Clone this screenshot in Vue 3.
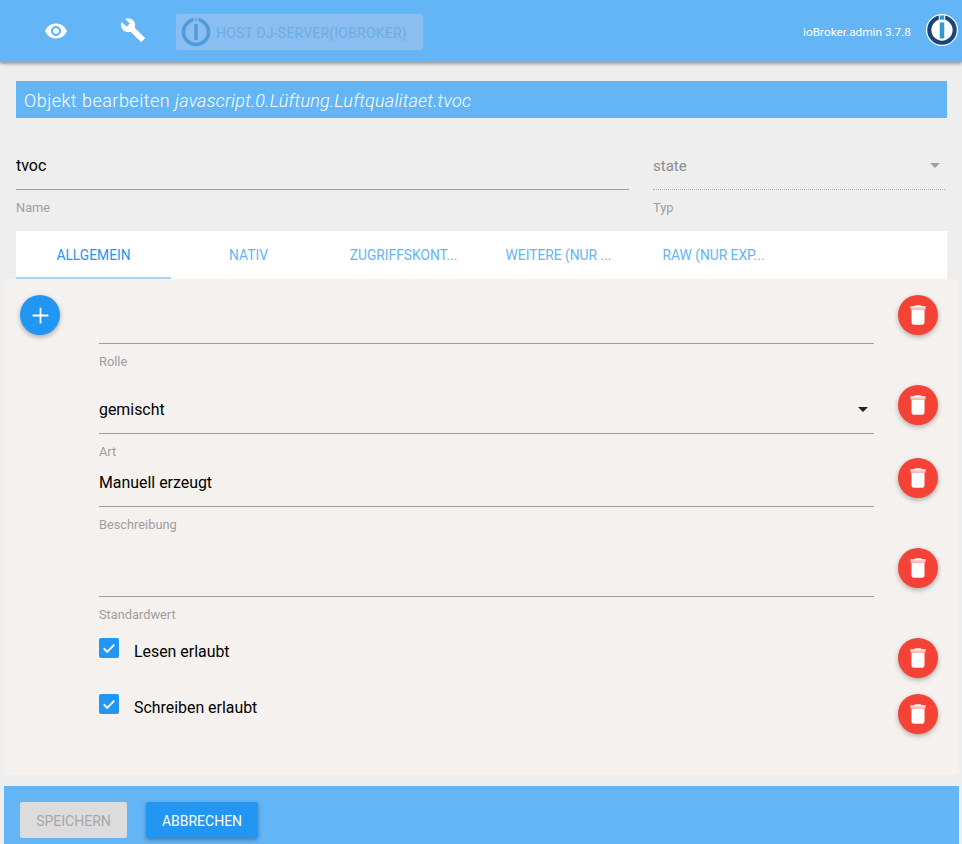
<script setup>
const tabs = [
  { label: 'ALLGEMEIN', active: true },
  { label: 'NATIV' },
  { label: 'ZUGRIFFSKONT...' },
  { label: 'WEITERE (NUR ...' },
  { label: 'RAW (NUR EXP...' }
]
const fields = [
  { label: 'Rolle', value: '', tall: true },
  { label: 'Art', value: 'gemischt', select: true },
  { label: 'Beschreibung', value: 'Manuell erzeugt', tall: true },
  { label: 'Standardwert', value: '', tall: true }
]
const checks = [
  { label: 'Lesen erlaubt', cls: 'check-first' },
  { label: 'Schreiben erlaubt', cls: 'check-last' }
]
</script>

<template>
  <div class="page">
    <header class="top">
      <button class="ico eye" aria-label="Objekte">
        <svg viewBox="0 0 24 24" width="24" height="24"><path fill="#fff" d="M12 4.5C7 4.5 2.73 7.61 1 12c1.73 4.39 6 7.5 11 7.5s9.27-3.11 11-7.5c-1.73-4.39-6-7.5-11-7.5zM12 17c-2.76 0-5-2.24-5-5s2.24-5 5-5 5 2.24 5 5-2.24 5-5 5zm0-8c-1.66 0-3 1.34-3 3s1.34 3 3 3 3-1.34 3-3-1.34-3-3-3z"/></svg>
      </button>
      <button class="ico wrench" aria-label="Einstellungen">
        <svg viewBox="0 0 24 24" width="26" height="26"><path fill="#fff" d="M22.7 19l-9.1-9.1c.9-2.3.4-5-1.5-6.9-2-2-5-2.4-7.4-1.3L9 6 6 9 1.6 4.7C.4 7.1.9 10.1 2.9 12.1c1.9 1.9 4.6 2.4 6.9 1.5l9.1 9.1c.4.4 1 .4 1.4 0l2.3-2.3c.5-.4.5-1.1.1-1.4z"/></svg>
      </button>
      <div class="host">
        <svg class="host-logo" viewBox="0 0 30 30" width="30" height="30">
          <circle cx="15" cy="15" r="12.5" fill="none" stroke="#4f9ada" stroke-width="3.6"/>
          <rect x="12.2" y="0.5" width="5.6" height="23" fill="#8abdf0"/>
          <rect x="13.4" y="7" width="3.2" height="16" fill="#4f9ada"/>
          <rect x="13.4" y="1" width="3.2" height="3.4" fill="#6fade4"/>
        </svg>
        <span class="host-text">HOST DJ-SERVER(IOBROKER)</span>
      </div>
      <span class="version">ioBroker.admin 3.7.8</span>
      <svg class="logo" viewBox="0 0 34 34" width="32" height="32">
        <circle cx="17" cy="17" r="17" fill="#fff"/>
        <circle cx="17" cy="17" r="13.5" fill="none" stroke="#19457c" stroke-width="4.4"/>
        <rect x="13.6" y="0.5" width="6.8" height="26" fill="#fff"/>
        <rect x="14.6" y="9" width="4.8" height="17" fill="#3399cc"/>
        <rect x="14.6" y="1.5" width="4.8" height="4.5" fill="#3399cc"/>
      </svg>
    </header>

    <h1 class="title">Objekt bearbeiten <em>javascript.0.Lüftung.Luftqualitaet.tvoc</em></h1>

    <section class="head">
      <div class="head-name">
        <div class="head-value strong">tvoc</div>
        <label class="head-label">Name</label>
      </div>
      <div class="head-type">
        <div class="head-value disabled">state<i class="caret grey"></i></div>
        <label class="head-label">Typ</label>
      </div>
    </section>

    <nav class="tabs">
      <a v-for="t in tabs" :key="t.label" class="tab" :class="{ active: t.active }">{{ t.label }}</a>
    </nav>

    <main class="panel">
      <button class="fab add" aria-label="Hinzufügen">
        <svg viewBox="0 0 24 24" width="27" height="27"><path fill="#fff" d="M19 12.8h-6.2V19h-1.6v-6.2H5v-1.6h6.2V5h1.6v6.2H19v1.6z"/></svg>
      </button>
      <div class="rows">
        <div v-for="f in fields" :key="f.label" class="row" :class="f.tall ? 'tall' : 'short'">
          <div class="field">
            <div class="value">{{ f.value }}<i v-if="f.select" class="caret dark"></i></div>
            <label class="label">{{ f.label }}</label>
          </div>
          <button class="fab del" aria-label="Löschen">
            <svg viewBox="0 0 24 24" width="26" height="26"><path fill="#fff" d="M6 19c0 1.1.9 2 2 2h8c1.1 0 2-.9 2-2V7H6v12z"/><path fill="#fff" d="M19 4h-3.5l-1-1h-5l-1 1H5v1.4h14V4z"/><path fill="#fbc4bf" d="M5 5.4h14V7H5z"/></svg>
          </button>
        </div>
        <div v-for="c in checks" :key="c.label" class="row" :class="c.cls">
          <div class="check">
            <span class="box">
              <svg viewBox="0 0 24 24" width="18" height="18"><path fill="none" stroke="#fff" stroke-width="2.6" d="M5 12.5l4.6 4.6L19 7.5"/></svg>
            </span>
            <span class="check-label">{{ c.label }}</span>
          </div>
          <button class="fab del" aria-label="Löschen">
            <svg viewBox="0 0 24 24" width="26" height="26"><path fill="#fff" d="M6 19c0 1.1.9 2 2 2h8c1.1 0 2-.9 2-2V7H6v12z"/><path fill="#fff" d="M19 4h-3.5l-1-1h-5l-1 1H5v1.4h14V4z"/><path fill="#fbc4bf" d="M5 5.4h14V7H5z"/></svg>
          </button>
        </div>
      </div>
    </main>

    <footer class="foot">
      <button class="btn off">SPEICHERN</button>
      <button class="btn on">ABBRECHEN</button>
    </footer>
  </div>
</template>

<style scoped>
.page {
  height: 844px;
  overflow: hidden;
  background: #eeeeee;
  font-family: Roboto, "Liberation Sans", sans-serif;
  color: #000;
}
button { border: 0; padding: 0; font-family: inherit; cursor: pointer; }

.top {
  height: 62px;
  background: #64b5f6;
  box-shadow: 0 2px 3px rgba(0, 0, 0, .35);
  display: flex;
  align-items: center;
  position: relative;
}
.ico { background: none; display: flex; }
.eye { margin-left: 44px; }
.wrench { margin-left: 52px; margin-bottom: 2px; }
.host {
  margin-left: 30px;
  margin-top: 1px;
  width: 247px;
  height: 36px;
  background: #8abdf0;
  border-radius: 2px;
  display: flex;
  align-items: center;
  padding-left: 5px;
  box-sizing: border-box;
}
.host-text {
  margin-left: 5px;
  margin-top: 2px;
  font-size: 14px;
  letter-spacing: .2px;
  color: #6fade4;
  white-space: nowrap;
}
.version { margin-left: auto; margin-top: 1px; font-size: 11.8px; color: #fff; }
.logo { margin: 0 4px 2px 15px; }

.title {
  margin: 19px 15px 0 16px;
  height: 37px;
  background: #64b5f6;
  color: #fff;
  font-size: 18px;
  font-weight: 300;
  letter-spacing: .48px;
  line-height: 39px;
  padding-left: 8px;
}
.title em { font-style: italic; letter-spacing: .22px; }

.head { display: flex; margin: 27px 17px 0 16px; height: 86px; }
.head-name { width: 613px; }
.head-type { width: 292px; margin-left: 24px; }
.head-value {
  height: 44px;
  line-height: 42px;
  font-size: 15px;
  border-bottom: 1px solid #9e9e9e;
  position: relative;
}
.head-value.strong { font-size: 16px; }
.head-value.disabled { color: #8c8c8c; border-bottom: 1px dotted #b0b0b0; }
.head-label { display: block; margin-top: 10px; font-size: 12.8px; color: #9e9e9e; }

.caret {
  position: absolute;
  width: 0;
  height: 0;
  border: 5px solid transparent;
  border-bottom: 0;
}
.caret.grey { right: 5px; top: 18px; border-top-color: #9e9e9e; }
.caret.dark { right: 6px; top: 22px; border-top-color: #212121; }

.tabs {
  margin: 0 15px 0 16px;
  height: 48px;
  background: #fff;
  display: flex;
}
.tab {
  width: 155px;
  box-sizing: border-box;
  text-align: center;
  line-height: 48px;
  font-size: 13.8px;
  color: #64b5f6;
  white-space: nowrap;
}
.tab.active { color: #2196f3; border-bottom: 2px solid #a6d5fa; }

.panel {
  margin: 0 3px 0 4px;
  height: 496px;
  background: #f5f1ee;
  position: relative;
  padding: 16px 21px 0 95px;
  box-sizing: border-box;
}
.fab {
  width: 40px;
  height: 40px;
  border-radius: 50%;
  display: flex;
  align-items: center;
  justify-content: center;
  box-shadow: 0 2px 5px rgba(0, 0, 0, .3);
  flex: none;
}
.add { position: absolute; left: 16px; top: 16px; background: #2196f3; }
.del { background: #f44336; }
.row { display: flex; justify-content: space-between; align-items: flex-start; }
.tall { height: 90px; }
.row.short { height: 73px; }
.check-first { height: 56px; }
.check-last { height: 40px; }
.field { width: 775px; }
.value {
  height: 47px;
  padding-top: 1px;
  line-height: 48px;
  font-size: 15.9px;
  border-bottom: 1px solid #9e9e9e;
  position: relative;
}
.label { display: block; margin-top: 10px; font-size: 12.8px; line-height: 16px; color: #9e9e9e; }

.check { display: flex; width: 775px; align-items: flex-start; }
.box {
  width: 20px;
  height: 20px;
  background: #2196f3;
  border-radius: 2px;
  display: flex;
  align-items: center;
  justify-content: center;
}
.check-label { margin-left: 15px; margin-top: 5px; font-size: 15.9px; line-height: 18px; }

.foot {
  margin: 11px 3px 0 4px;
  height: 58px;
  background: #64b5f6;
  display: flex;
  padding: 16px 0 0 16px;
  box-sizing: border-box;
  align-items: flex-start;
}
.btn {
  height: 36px;
  padding-top: 2px;
  border-radius: 2px;
  font-size: 14px;
}
.off { width: 107px; background: #dcdcdc; color: #a8a8a8; }
.on {
  width: 112px;
  margin-left: 19px;
  background: #2196f3;
  color: #fff;
  box-shadow: 0 2px 4px rgba(0, 0, 0, .3);
}
</style>
